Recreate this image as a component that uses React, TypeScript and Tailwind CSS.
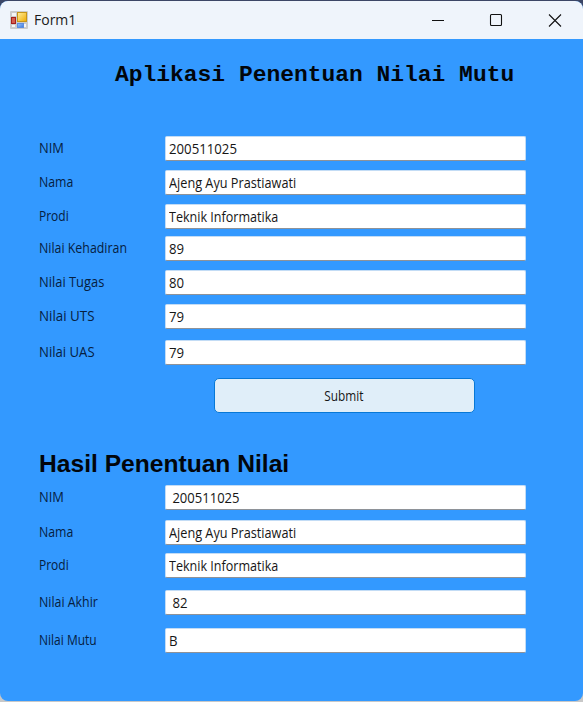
type Field = { label: string; value: string; row: string; labelFit: string; valueFit: string };

const inputs: Field[] = [
  { label: 'NIM', value: '200511025', row: 'mt-0', labelFit: 'scale-x-[.86]', valueFit: 'scale-x-[.88]' },
  { label: 'Nama', value: 'Ajeng Ayu Prastiawati', row: 'mt-[9px]', labelFit: 'scale-x-[.82]', valueFit: 'scale-x-[.847]' },
  { label: 'Prodi', value: 'Teknik Informatika', row: 'mt-[9px]', labelFit: 'scale-x-[.80]', valueFit: 'scale-x-[.838]' },
  { label: 'Nilai Kehadiran', value: '89', row: 'mt-[7px]', labelFit: 'scale-x-[.825]', valueFit: 'scale-x-[.88]' },
  { label: 'Nilai Tugas', value: '80', row: 'mt-[9px]', labelFit: 'scale-x-[.86]', valueFit: 'scale-x-[.88]' },
  { label: 'Nilai UTS', value: '79', row: 'mt-[9px]', labelFit: 'scale-x-[.89]', valueFit: 'scale-x-[.88]' },
  { label: 'Nilai UAS', value: '79', row: 'mt-[11px]', labelFit: 'scale-x-[.875]', valueFit: 'scale-x-[.88]' },
];

const results: Field[] = [
  { label: 'NIM', value: ' 200511025', row: 'mt-0', labelFit: 'scale-x-[.86]', valueFit: 'scale-x-[.87]' },
  { label: 'Nama', value: 'Ajeng Ayu Prastiawati', row: 'mt-[10px]', labelFit: 'scale-x-[.82]', valueFit: 'scale-x-[.847]' },
  { label: 'Prodi', value: 'Teknik Informatika', row: 'mt-[8px]', labelFit: 'scale-x-[.80]', valueFit: 'scale-x-[.838]' },
  { label: 'Nilai Akhir', value: ' 82', row: 'mt-[12px]', labelFit: 'scale-x-[.825]', valueFit: 'scale-x-[.88]' },
  { label: 'Nilai Mutu', value: 'B', row: 'mt-[13px]', labelFit: 'scale-x-[.80]', valueFit: 'scale-x-[.88]' },
];

function Row({ label, value, row, labelFit, valueFit }: Field) {
  return (
    <div className={`flex h-[25px] pl-[39px] ${row}`}>
      <div className="w-[126px] shrink-0 whitespace-pre text-[15px] leading-[23px] text-[#06203f]">
        <span className={`inline-block origin-left ${labelFit}`}>{label}</span>
      </div>
      <div className="h-[25px] w-[361px] rounded-[2px] border border-[#c3dcf5] border-b-[#8e9298] bg-white pl-[3px] text-[15px] leading-[22px] whitespace-pre text-[#161616]">
        <span className={`inline-block origin-left ${valueFit}`}>{value}</span>
      </div>
    </div>
  );
}

function FormIcon() {
  return (
    <svg width="18" height="18" viewBox="0 0 18 18">
      <defs>
        <linearGradient id="gold" x1="0" y1="0" x2="1" y2="1">
          <stop offset="0" stopColor="#fff0a0" />
          <stop offset="1" stopColor="#efaa00" />
        </linearGradient>
        <linearGradient id="blue" x1="0" y1="0" x2="1" y2="1">
          <stop offset="0" stopColor="#9cc4fa" />
          <stop offset="1" stopColor="#3b78dc" />
        </linearGradient>
      </defs>
      <rect width="18" height="18" rx="1" fill="#cbcbcb" />
      <path d="M2 2h4v3H2zM2 14h3v2H2zM14 13h2v3h-2z" fill="#f5f5f5" />
      <rect x="7.5" y="1.5" width="9" height="9" fill="url(#gold)" stroke="#c69518" />
      <rect x="1.5" y="6.5" width="4" height="6" fill="#d45b4c" stroke="#a61f1b" />
      <rect x="7.5" y="12.5" width="6" height="4" fill="url(#blue)" stroke="#5d8dde" />
    </svg>
  );
}

export default function App() {
  return (
    <div className="h-[702px] w-[583px] overflow-hidden bg-[linear-gradient(to_bottom,#3c4666_50%,#c8c8c8_50%)] pt-px font-['Open_Sans',sans-serif]">
      <div className="h-[700px] overflow-hidden rounded-[8px] bg-[#3399ff]">
        <header className="flex h-[38px] items-center bg-[#eff4fb] pl-[10px]">
          <FormIcon />
          <span className="ml-[6px] text-[14px] leading-[20px] text-[#1a1a1a]">Form1</span>
          <svg className="ml-auto mr-[20px]" width="132" height="14" viewBox="0 0 132 14" fill="none" stroke="#111" strokeWidth="1.1">
            <path d="M1 7.5h12" />
            <rect x="59.5" y="1.5" width="11" height="11" rx="1" />
            <path d="M118 1.5l12 12M130 1.5l-12 12" />
          </svg>
        </header>
        <h1 className="ml-[115px] mt-[22px] h-[28px] whitespace-nowrap font-['Liberation_Mono',monospace] text-[22.95px] font-bold leading-[28px] text-[#02060b]">
          Aplikasi Penentuan Nilai Mutu
        </h1>
        <main>
          <section className="mt-[47px]">
            {inputs.map((f) => <Row key={f.label} {...f} />)}
          </section>
          <button className="ml-[214px] mt-[13px] block h-[35px] w-[261px] rounded-[5px] border border-[#0878d6] bg-[#e0eef9] text-[15px] leading-[32px] text-[#161616]">
            <span className="inline-block -translate-x-px -translate-y-px scale-x-[.79]">Submit</span>
          </button>
          <h2 className="ml-[39px] mt-[36px] h-[30px] origin-left scale-x-[1.025] whitespace-nowrap font-['Liberation_Sans',sans-serif] text-[24px] font-bold leading-[30px] text-[#02060b]">
            Hasil Penentuan Nilai
          </h2>
          <section className="mt-[6px]">
            {results.map((f) => <Row key={f.label} {...f} />)}
          </section>
        </main>
      </div>
    </div>
  );
}
